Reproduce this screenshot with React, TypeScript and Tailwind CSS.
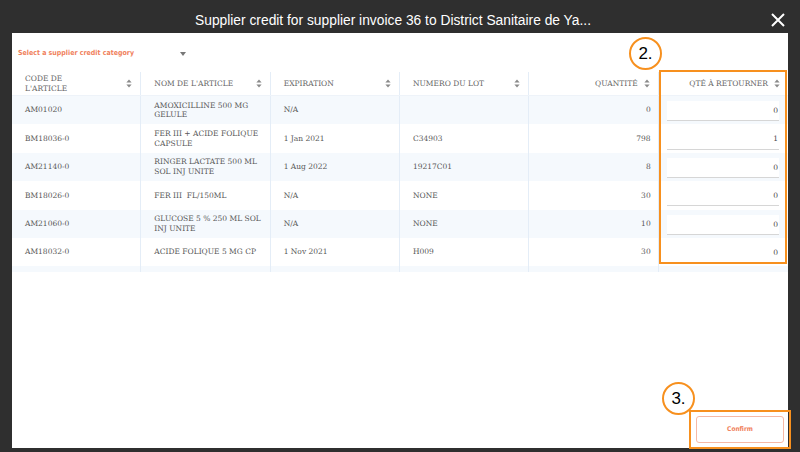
import React from "react";

type Row = {
  code: string;
  name: string[];
  exp: string;
  lot: string;
  qty: string;
  ret: string;
};

const rows: Row[] = [
  { code: "AM01020", name: ["AMOXICILLINE 500 MG", "GELULE"], exp: "N/A", lot: "", qty: "0", ret: "0" },
  { code: "BM18036-0", name: ["FER III + ACIDE FOLIQUE", "CAPSULE"], exp: "1 Jan 2021", lot: "C34903", qty: "798", ret: "1" },
  { code: "AM21140-0", name: ["RINGER LACTATE 500 ML", "SOL INJ UNITE"], exp: "1 Aug 2022", lot: "19217C01", qty: "8", ret: "0" },
  { code: "BM18026-0", name: ["FER III  FL/150ML"], exp: "N/A", lot: "NONE", qty: "30", ret: "0" },
  { code: "AM21060-0", name: ["GLUCOSE 5 % 250 ML SOL", "INJ UNITE"], exp: "N/A", lot: "NONE", qty: "10", ret: "0" },
  { code: "AM18032-0", name: ["ACIDE FOLIQUE 5 MG CP"], exp: "1 Nov 2021", lot: "H009", qty: "30", ret: "0" },
];

const SortIcon = () => (
  <svg width="6" height="9" viewBox="0 0 6 9" className="shrink-0">
    <path d="M3 0.5 L5.6 3.6 H0.4 Z" fill="#8a8a8a" />
    <path d="M3 8.5 L5.6 5.4 H0.4 Z" fill="#8a8a8a" />
  </svg>
);

const cell = "border-r border-[#e4edf7] px-[13px] flex items-center";

const App = () => {
  return (
    <div className="w-[800px] h-[452px] bg-[#2f2f2f] flex flex-col relative overflow-hidden">
      {/* title bar */}
      <div className="h-[33px] relative flex items-center justify-center pr-[14px]">
        <span className="text-white text-[13.8px] pt-[10px] font-['Liberation_Sans',sans-serif]">
          Supplier credit for supplier invoice 36 to District Sanitaire de Ya...
        </span>
        <svg
          width="14"
          height="14"
          viewBox="0 0 14 14"
          className="absolute right-[15px] top-[13px]"
        >
          <path d="M1 1 L13 13 M13 1 L1 13" stroke="#fff" strokeWidth="2" />
        </svg>
      </div>

      {/* panel */}
      <div className="mx-[12px] h-[415px] bg-white flex flex-col font-['DejaVu_Serif','Liberation_Serif',serif]">
        <div className="h-[39px] flex items-center pl-[6px] pt-[2px]">
          <div className="w-[168px] flex items-center justify-between text-[#f07f5c] text-[7px] font-['DejaVu_Sans_Condensed','Liberation_Sans',sans-serif] font-bold">
            <span>Select a supplier credit category</span>
            <svg width="6" height="4" viewBox="0 0 6 4">
              <path d="M0 0 H6 L3 4 Z" fill="#777" />
            </svg>
          </div>
        </div>

        {/* table header */}
        <div className="grid grid-cols-6 h-[24px] text-[7.5px] leading-[9.5px] text-[#666] border-b border-[#eef3f9]">
          <div className={`${cell} justify-between pr-[8px]`}>
            <span>
              CODE DE
              <br />
              L'ARTICLE
            </span>
            <SortIcon />
          </div>
          <div className={`${cell} justify-between pr-[8px]`}>
            <span>NOM DE L'ARTICLE</span>
            <SortIcon />
          </div>
          <div className={`${cell} justify-between pr-[8px]`}>
            <span>EXPIRATION</span>
            <SortIcon />
          </div>
          <div className={`${cell} justify-between pr-[8px]`}>
            <span>NUMERO DU LOT</span>
            <SortIcon />
          </div>
          <div className={`${cell} justify-end gap-[6px] pr-[8px]`}>
            <span>QUANTITÉ</span>
            <SortIcon />
          </div>
          <div className="px-[13px] flex items-center justify-end gap-[6px] pr-[8px]">
            <span>QTÉ À RETOURNER</span>
            <SortIcon />
          </div>
        </div>

        {/* table body, scrolled: a seventh row peeks in at the bottom */}
        <div className="h-[176px] overflow-hidden text-[7.5px] leading-[9.5px] text-[#585858]">
          {rows.map((r, i) => (
            <div
              key={r.code}
              className={`grid grid-cols-6 h-[28.4px] ${i % 2 === 0 ? "bg-[#f5f9fd]" : "bg-white"}`}
            >
              <div className={cell}>{r.code}</div>
              <div className={cell}>
                <span>
                  {r.name.map((l, j) => (
                    <span key={j} className="block whitespace-pre">
                      {l}
                    </span>
                  ))}
                </span>
              </div>
              <div className={cell}>{r.exp}</div>
              <div className={cell}>{r.lot}</div>
              <div className={`${cell} justify-end pr-[7px]`}>{r.qty}</div>
              <div className="flex items-center pl-[8px] pr-[9px]">
                <div className="w-full h-[20px] mt-[2px] bg-white border-b border-[#d6d6d6] flex items-center justify-end pr-[1px] text-[#4a4a4a]">
                  {r.ret}
                </div>
              </div>
            </div>
          ))}
          <div className="grid grid-cols-6 h-[28.4px] bg-[#f5f9fd]">
            <div className={cell} />
            <div className={cell} />
            <div className={cell} />
            <div className={cell} />
            <div className={cell} />
            <div />
          </div>
        </div>

        <div className="flex-1" />

        <div className="flex justify-end pr-[4px] pb-[5px]">
          <button className="w-[88px] h-[27px] rounded-[3px] border border-[#f6b9a6] bg-white text-[#f07f5c] text-[6.5px] font-bold font-['DejaVu_Sans_Condensed','Liberation_Sans',sans-serif]">
            Confirm
          </button>
        </div>
      </div>
      <div className="h-[4px]" />

      {/* annotations */}
      <div className="absolute left-[659px] top-[70px] w-[128px] h-[194px] border-2 border-[#f7901e]" />
      <div className="absolute left-[629px] top-[37px] w-[33px] h-[33px] rounded-full border-2 border-[#f7901e] bg-white flex items-center justify-center text-[17px] text-black font-['Liberation_Sans',sans-serif]">
        2.
      </div>
      <div className="absolute left-[689px] top-[410px] w-[102px] h-[39px] border-[2.5px] border-[#f7901e]" />
      <div className="absolute left-[662px] top-[382px] w-[33px] h-[33px] rounded-full border-2 border-[#f7901e] bg-white flex items-center justify-center text-[17px] text-black font-['Liberation_Sans',sans-serif]">
        3.
      </div>
    </div>
  );
};

export default App;
